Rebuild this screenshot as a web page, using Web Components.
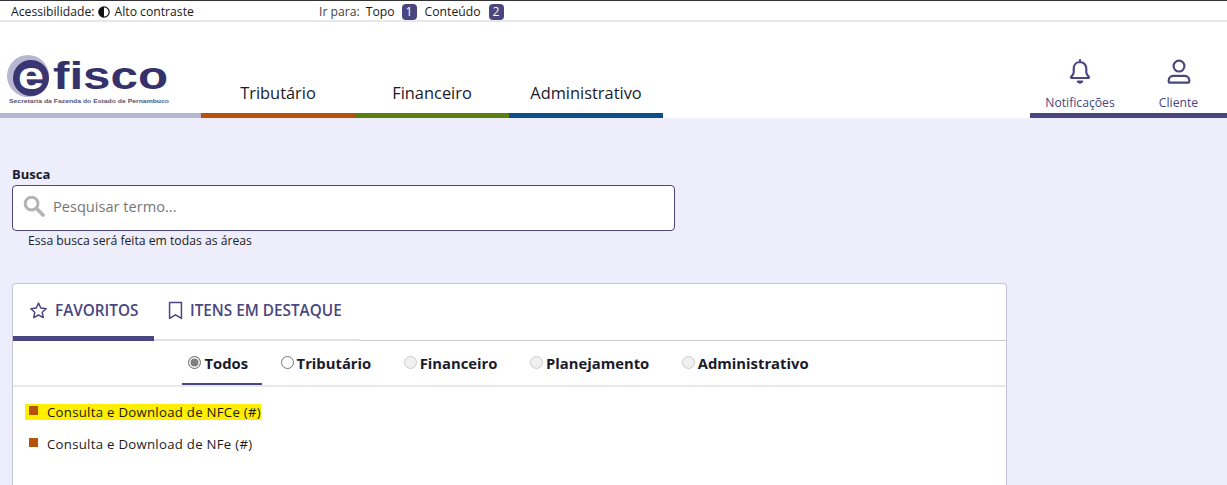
<!DOCTYPE html>
<html lang="pt-BR">
<head>
<meta charset="utf-8">
<title>eFisco</title>
<style>
  html, body { margin: 0; padding: 0; height: 100%; overflow: hidden; }
  body {
    background: #eeedfb;
    font-family: "Open Sans", "Noto Sans", sans-serif;
    color: #1a1a2a;
  }
</style>
</head>
<body>
<efisco-topbar></efisco-topbar>
<efisco-header>
  <nav-tab color="#b45309">Tributário</nav-tab>
  <nav-tab color="#5b7f0e">Financeiro</nav-tab>
  <nav-tab color="#0b4f8a">Administrativo</nav-tab>
  <user-action slot="actions" icon="bell" style="width:100px">Notificações</user-action>
  <user-action slot="actions" icon="user" style="width:97px">Cliente</user-action>
</efisco-header>
<search-box></search-box>
<fav-card>
  <card-tab slot="tabs" icon="star" active style="width:141px;padding-left:16px">FAVORITOS</card-tab>
  <card-tab slot="tabs" icon="bookmark" style="width:205px;padding-left:12px;gap:5px">ITENS EM DESTAQUE</card-tab>
  <filter-radio slot="filters" state="checked">Todos</filter-radio>
  <filter-radio slot="filters">Tributário</filter-radio>
  <filter-radio slot="filters" state="disabled">Financeiro</filter-radio>
  <filter-radio slot="filters" state="disabled">Planejamento</filter-radio>
  <filter-radio slot="filters" state="disabled">Administrativo</filter-radio>
  <fav-item highlight>Consulta e Download de NFCe (#)</fav-item>
  <fav-item>Consulta e Download de NFe (#)</fav-item>
</fav-card>

<script>
// small helper, every element renders once in its constructor
function shadow(el, html) {
  el.attachShadow({ mode: 'open' }).innerHTML = html;
}

class EfiscoTopbar extends HTMLElement {
  constructor() {
    super();
    shadow(this, `
      <style>
        :host {
          display: flex;
          align-items: center;
          box-sizing: border-box;
          height: 22px;
          padding: 3px 0 1px 11px;
          background: #fff;
          border-top: 1px solid #333;
          border-bottom: 2px solid #e8e8e8;
          font-size: 12.2px;
          color: #1a1a1a;
        }
        .acc { display: flex; align-items: center; width: 308px; }
        .contrast { margin: 0 5px 0 3px; display: block; }
        .go { color: #444; margin-right: 6px; }
        .link { margin-right: 7px; }
        .num {
          display: block;
          width: 15px;
          height: 16px;
          line-height: 16px;
          text-align: center;
          border-radius: 4px;
          background: #4a4680;
          color: #fff;
          margin-right: 8px;
        }
      </style>
      <div class="acc">Acessibilidade:
        <svg class="contrast" width="12" height="12" viewBox="0 0 12 12">
          <circle cx="6" cy="6" r="5.2" fill="#fff" stroke="#111" stroke-width="1.2"/>
          <path d="M6 .8a5.2 5.2 0 0 0 0 10.4z" fill="#111"/>
        </svg>Alto contraste</div>
      <span class="go">Ir para:</span>
      <span class="link">Topo</span><span class="num">1</span>
      <span class="link" style="margin-right:8px">Conteúdo</span><span class="num">2</span>
    `);
  }
}

class EfiscoHeader extends HTMLElement {
  constructor() {
    super();
    shadow(this, `
      <style>
        :host { display: flex; height: 96px; background: #fff; }
        .logo {
          box-sizing: border-box;
          width: 201px;
          border-bottom: 5px solid #b8b6d0;
          padding: 33px 0 0 7px;
        }
        svg { display: block; }
        .tabs { display: flex; }
        .actions { display: flex; margin-left: auto; }
      </style>
      <div class="logo">
        <svg width="164" height="52" viewBox="0 0 164 52">
          <circle cx="21" cy="21" r="21" fill="#b8b6d0"/>
          <circle cx="24" cy="23" r="18" fill="#3a3672"/>
          <text x="11" y="34" font-family="Liberation Sans" font-weight="700" font-size="38" fill="#fff" textLength="26" lengthAdjust="spacingAndGlyphs">e</text>
          <text x="46" y="34" font-family="Liberation Sans" font-weight="700" font-size="38" fill="#35316b" textLength="115" lengthAdjust="spacingAndGlyphs">fisco</text>
          <text x="2" y="48.4" font-family="Liberation Sans" font-weight="700" font-size="6.2" fill="#55556f" textLength="160" lengthAdjust="spacingAndGlyphs">Secretaria da Fazenda do Estado de Pernambuco</text>
        </svg>
      </div>
      <div class="tabs"><slot></slot></div>
      <div class="actions"><slot name="actions"></slot></div>
    `);
  }
}

class NavTab extends HTMLElement {
  constructor() {
    super();
    shadow(this, `
      <style>
        :host {
          display: flex;
          box-sizing: border-box;
          width: 154px;
          height: 96px;
          align-items: flex-end;
          justify-content: center;
          padding-bottom: 9px;
          border-bottom: 5px solid ${this.getAttribute('color')};
          font-size: 16.4px;
          line-height: 22px;
          color: #1a1a2a;
        }
      </style>
      <slot></slot>
    `);
  }
}

const ICONS = {
  bell: `<path d="M12 3.2c-3.6 0-5.8 2.8-5.8 6.2v3.4c0 1.6-1.1 3-2.4 4.2-.4.4-.1 1 .4 1h15.6c.5 0 .8-.6.4-1-1.3-1.2-2.4-2.6-2.4-4.2V9.4c0-3.4-2.2-6.2-5.8-6.2z"/><path d="M12 1.4v1.8"/><path d="M10 21.2h4l-2 1.2z" fill="#4a4680"/>`,
  user: `<circle cx="12" cy="7" r="5"/><path d="M3.5 22.2h17c.6 0 1-.4 1-1v-1c0-2.6-2.2-4.2-4.6-4.2H7.1c-2.4 0-4.6 1.6-4.6 4.2v1c0 .6.4 1 1 1z"/>`,
  star: `<path d="M12 2.6l2.9 6.2 6.8.9-5 4.6 1.3 6.7-6-3.3-6 3.3 1.3-6.7-5-4.6 6.8-.9z"/>`,
  bookmark: `<path d="M4.5 2h15v20L12 17.4 4.5 22z"/>`
};

class UserAction extends HTMLElement {
  constructor() {
    super();
    shadow(this, `
      <style>
        :host {
          display: flex;
          flex-direction: column;
          align-items: center;
          box-sizing: border-box;
          height: 96px;
          padding-top: 36px;
          border-bottom: 5px solid #4a4680;
          font-size: 12.2px;
          color: #4a4680;
        }
        svg { display: block; margin-bottom: 9px; }
      </style>
      <svg width="26" height="27" viewBox="0 0 24 24" fill="none" stroke="#4a4680" stroke-width="2" stroke-linecap="round" stroke-linejoin="round">${ICONS[this.getAttribute('icon')]}</svg>
      <slot></slot>
    `);
  }
}

class SearchBox extends HTMLElement {
  constructor() {
    super();
    shadow(this, `
      <style>
        :host { display: block; padding: 46px 0 0 12px; }
        label { display: block; font-size: 13px; font-weight: 700; line-height: 20px; margin-bottom: 1px; color: #1a1a2a; }
        .field {
          box-sizing: border-box;
          display: flex;
          align-items: center;
          gap: 8px;
          width: 663px;
          height: 46px;
          padding: 0 0 5px 10px;
          background: #fff;
          border: 1px solid #4a4680;
          border-radius: 4px;
        }
        input {
          flex: 1;
          border: 0;
          outline: 0;
          padding: 0;
          font: 14.6px "Open Sans", "Noto Sans", sans-serif;
          color: #333;
        }
        input::placeholder { color: #777; opacity: 1; }
        .hint { margin: 1px 0 0 16px; font-size: 12.2px; line-height: 18px; color: #222; }
      </style>
      <label>Busca</label>
      <div class="field">
        <svg width="22" height="22" viewBox="0 0 22 22" fill="none" stroke="#b4b4b4">
          <circle cx="8.6" cy="8.6" r="6.4" stroke-width="3"/>
          <path d="M13.5 13.5l6.5 6.5" stroke-width="3.6" stroke-linecap="round"/>
        </svg>
        <input placeholder="Pesquisar termo...">
      </div>
      <div class="hint">Essa busca será feita em todas as áreas</div>
    `);
  }
}

class FavCard extends HTMLElement {
  constructor() {
    super();
    shadow(this, `
      <style>
        :host {
          display: block;
          box-sizing: border-box;
          width: 995px;
          height: 202px;
          margin: 33px 0 0 12px;
          background: #fff;
          border: 1px solid #c5c3d8;
          border-bottom: 0;
          border-radius: 4px 4px 0 0;
          overflow: hidden;
        }
        .tabs { display: flex; height: 57px; box-sizing: border-box; border-bottom: 1px solid #ccc; }
        .filters {
          display: flex;
          gap: 12.5px;
          justify-content: center;
          height: 46px;
          box-sizing: border-box;
          padding-right: 14px;
          border-bottom: 2px solid #e8e8e8;
        }
        .items { padding: 17px 12px 0; }
      </style>
      <div class="tabs"><slot name="tabs"></slot></div>
      <div class="filters"><slot name="filters"></slot></div>
      <div class="items"><slot></slot></div>
    `);
  }
}

class CardTab extends HTMLElement {
  constructor() {
    super();
    const active = this.hasAttribute('active');
    shadow(this, `
      <style>
        :host {
          display: flex;
          align-items: center;
          gap: 7px;
          box-sizing: border-box;
          height: 57px;
          padding-bottom: 0;
          border-bottom: ${active ? '5px solid #4a4680' : '2px solid #e0e0e0'};
          font-size: 15.3px;
          font-weight: 600;
          color: #4a4680;
          ${active ? '' : 'padding-bottom:3px;'}
        }
        svg { display: block; flex: none; }
      </style>
      <svg width="19" height="19" viewBox="0 0 24 24" fill="none" stroke="#4a4680" stroke-width="1.9" stroke-linejoin="round">${ICONS[this.getAttribute('icon')]}</svg>
      <slot></slot>
    `);
  }
}

class FilterRadio extends HTMLElement {
  constructor() {
    super();
    const state = this.getAttribute('state');
    const on = state === 'checked';
    const off = state === 'disabled';
    shadow(this, `
      <style>
        :host {
          display: flex;
          align-items: center;
          gap: 3px;
          box-sizing: border-box;
          height: 44px;
          padding: 1px 14px 0 6px;
          border-bottom: 2px solid ${on ? '#4a4680' : 'transparent'};
          margin-bottom: -2px;
          font-size: 14.8px;
          font-weight: 700;
          color: #1a1a2a;
        }
        .dot {
          box-sizing: border-box;
          width: 13px;
          height: 13px;
          border-radius: 50%;
          background: ${off ? '#f0f0f0' : '#fff'};
          border: 1px solid ${off ? '#ccc' : '#767676'};
          ${on ? 'box-shadow: inset 0 0 0 1.5px #fff; background: #808080;' : ''}
        }
      </style>
      <span class="dot"></span><slot></slot>
    `);
  }
}

class FavItem extends HTMLElement {
  constructor() {
    super();
    const hl = this.hasAttribute('highlight');
    shadow(this, `
      <style>
        :host {
          display: flex;
          align-items: center;
          gap: 9px;
          box-sizing: border-box;
          width: fit-content;
          height: 16px;
          padding: 0 0 0 4px;
          margin-bottom: 16px;
          font-size: 13.2px;
          letter-spacing: .28px;
          background: ${hl ? '#ffee00' : 'transparent'};
          color: #1a1a1a;
        }
        .sq { width: 9px; height: 9px; background: #b45309; margin-top: -4px; }
      </style>
      <span class="sq"></span><slot></slot>
    `);
  }
}

customElements.define('efisco-topbar', EfiscoTopbar);
customElements.define('efisco-header', EfiscoHeader);
customElements.define('nav-tab', NavTab);
customElements.define('user-action', UserAction);
customElements.define('search-box', SearchBox);
customElements.define('fav-card', FavCard);
customElements.define('card-tab', CardTab);
customElements.define('filter-radio', FilterRadio);
customElements.define('fav-item', FavItem);
</script>
</body>
</html>
